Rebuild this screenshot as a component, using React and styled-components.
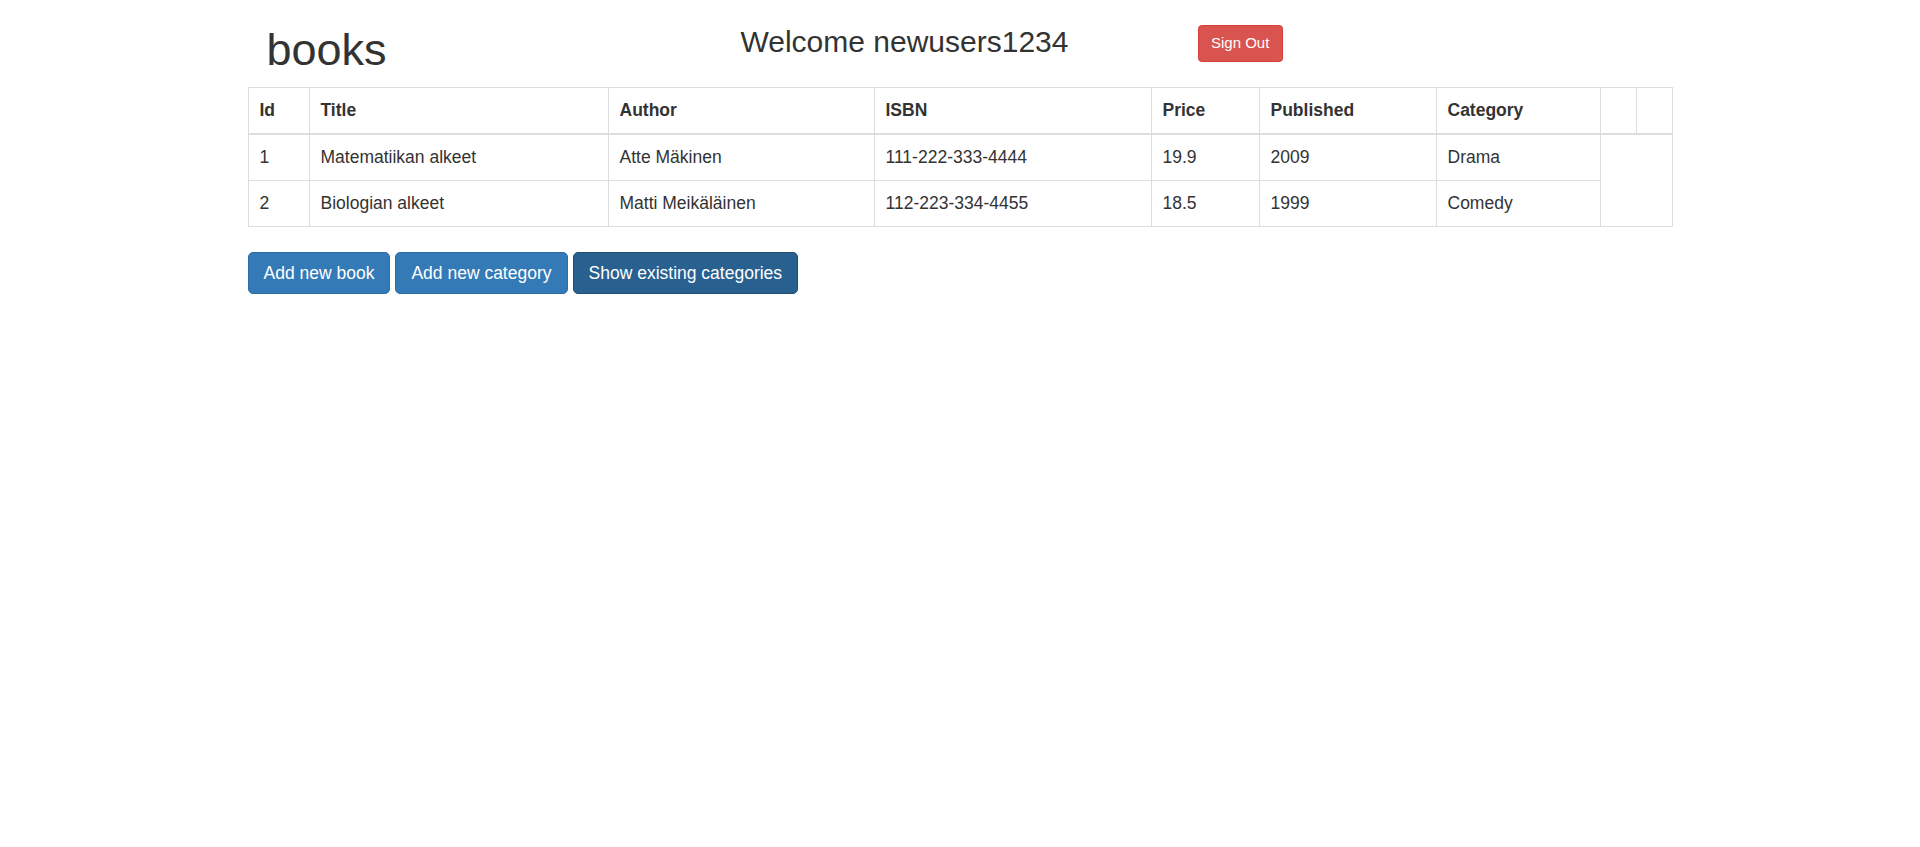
import React from "react";
import styled, { createGlobalStyle } from "styled-components";

const GlobalStyle = createGlobalStyle`
    html, body {
        margin: 0;
        padding: 0;
        background: #fff;
    }
    body {
        font-family: "Liberation Sans", Arial, Helvetica, sans-serif;
        font-size: 17.5px;
        line-height: 25px;
        color: #333;
    }
    * {
        box-sizing: border-box;
    }
`

const books = [
    { id: 1, title: "Matematiikan alkeet", author: "Atte Mäkinen", isbn: "111-222-333-4444", price: 19.9, year: 2009, category: "Drama" },
    { id: 2, title: "Biologian alkeet", author: "Matti Meikäläinen", isbn: "112-223-334-4455", price: 18.5, year: 1999, category: "Comedy" },
];

// widths measured off the page, the last two are the edit / delete slots
const columns = [
    { label: "Id", width: 61 },
    { label: "Title", width: 299 },
    { label: "Author", width: 266 },
    { label: "ISBN", width: 277 },
    { label: "Price", width: 108 },
    { label: "Published", width: 177 },
    { label: "Category", width: 164 },
    { label: "", width: 36 },
    { label: "", width: 36 },
];

const App = () => {
    return (
        <Container>
            <GlobalStyle />
            <Header>
                <Brand>books</Brand>
                <Welcome>Welcome newusers1234</Welcome>
                <div>
                    <Button $variant="danger" $small>Sign Out</Button>
                </div>
            </Header>
            <Table>
                <colgroup>
                    {columns.map((c, i) => <col key={i} style={{ width: c.width }} />)}
                </colgroup>
                <thead>
                    <tr>
                        {columns.map((c, i) => <Th key={i}>{c.label}</Th>)}
                    </tr>
                </thead>
                <tbody>
                    {books.map((book, index) =>
                        <tr key={book.id}>
                            <Td>{book.id}</Td>
                            <Td>{book.title}</Td>
                            <Td>{book.author}</Td>
                            <Td>{book.isbn}</Td>
                            <Td>{book.price}</Td>
                            <Td>{book.year}</Td>
                            <Td>{book.category}</Td>
                            {index === 0 && <Td colSpan={2} rowSpan={books.length}></Td>}
                        </tr>
                    )}
                </tbody>
            </Table>
            <Actions>
                <Button $variant="primary">Add new book</Button>
                <Button $variant="primary">Add new category</Button>
                <Button $variant="active">Show existing categories</Button>
            </Actions>
        </Container>
    );
};

export default App;

const Container = styled.div`
    width: 1425px;
    margin: 0 auto;
    min-height: 847px;
`

const Header = styled.div`
    display: flex;
    align-items: flex-start;
    padding-top: 25px;
`

const Brand = styled.h1`
    width: 493px;
    margin: 0 0 12.5px 0;
    padding-left: 19px;
    font-size: 45px;
    font-weight: 500;
    line-height: 49.5px;
`

const Welcome = styled.h3`
    width: 457px;
    margin: 0;
    font-size: 30px;
    font-weight: 500;
    line-height: 33px;
`

const palette = {
    primary: { bg: "#337ab7", border: "#2e6da4" },
    active: { bg: "#286090", border: "#204d74" },
    danger: { bg: "#d9534f", border: "#d43f3a" },
};

const Button = styled.button`
    display: inline-block;
    font-family: "Liberation Sans", Arial, Helvetica, sans-serif;
    font-size: ${p => p.$small ? "15px" : "17.5px"};
    line-height: ${p => p.$small ? "22.5px" : "25px"};
    padding: ${p => p.$small ? "6.25px 12.5px" : "7.5px 15px"};
    border-radius: ${p => p.$small ? "3.75px" : "5px"};
    color: #fff;
    background-color: ${p => palette[p.$variant].bg};
    border: 1px solid ${p => palette[p.$variant].border};
    cursor: pointer;
    white-space: nowrap;
`

const Table = styled.table`
    width: 1425px;
    table-layout: fixed;
    border-collapse: collapse;
    border-spacing: 0;
    border: 1px solid #ddd;
    margin-bottom: 25px;
`

const Th = styled.th`
    text-align: left;
    font-weight: bold;
    padding: 10px 10px 10px 11px;
    line-height: 25px;
    border: 1px solid #ddd;
    border-bottom: 2px solid #ddd;
    vertical-align: bottom;
`

const Td = styled.td`
    padding: 10px 10px 10px 11px;
    line-height: 25px;
    border: 1px solid #ddd;
    vertical-align: top;
`

const Actions = styled.div`
    display: flex;
    gap: 5px;
`
